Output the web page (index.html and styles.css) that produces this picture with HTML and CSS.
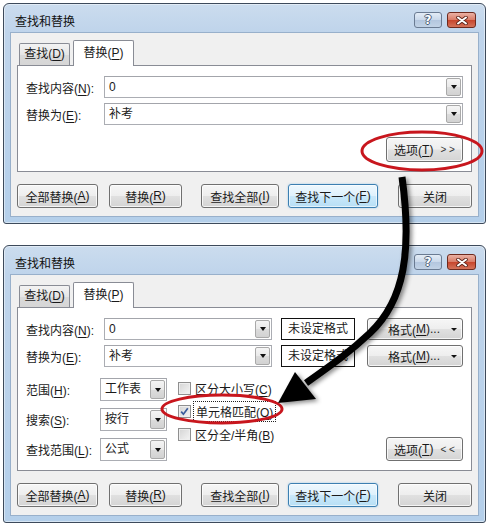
FILE: index.html
```html
<!DOCTYPE html>
<html lang="zh-CN">
<head>
    <meta charset="UTF-8">
    <title>查找和替换</title>
    <link rel="stylesheet" href="styles.css">
</head>
<body>
<div class="page">

    <!-- collapsed dialog -->
    <div class="window">
        <div class="titlebar">
            <span class="title">查找和替换</span>
            <div class="caption-btns">
                <span class="cap-btn cap-help">?</span>
                <span class="cap-btn cap-close">
                    <svg width="12" height="9" viewBox="0 0 12 9"><path d="M2 1.5L10 7.5M10 1.5L2 7.5" stroke="#5a2218" stroke-width="3.6" stroke-linecap="round"/><path d="M2 1.5L10 7.5M10 1.5L2 7.5" stroke="#fff" stroke-width="2" stroke-linecap="round"/></svg>
                </span>
            </div>
        </div>
        <div class="client">
            <div class="tabs">
                <span class="tab">查找(<u>D</u>)</span>
                <span class="tab active">替换(<u>P</u>)</span>
            </div>
            <div class="panel">
                <div class="field-row">
                    <span class="field-label">查找内容(<u>N</u>):</span>
                    <div class="combo"><span class="combo-value">0</span><span class="drop"></span></div>
                </div>
                <div class="field-row">
                    <span class="field-label">替换为(<u>E</u>):</span>
                    <div class="combo"><span class="combo-value">补考</span><span class="drop"></span></div>
                </div>
                <div class="options-row">
                    <span class="btn btn-options">选项(<u>T</u>)<span class="chev">&gt; &gt;</span></span>
                </div>
            </div>
            <div class="button-row">
                <span class="btn btn-replace-all">全部替换(<u>A</u>)</span>
                <span class="btn btn-replace">替换(<u>R</u>)</span>
                <span class="btn btn-find-all">查找全部(<u>I</u>)</span>
                <span class="btn btn-find-next default">查找下一个(<u>F</u>)</span>
                <span class="btn btn-close">关闭</span>
            </div>
        </div>
    </div>

    <!-- expanded dialog -->
    <div class="window">
        <div class="titlebar">
            <span class="title">查找和替换</span>
            <div class="caption-btns">
                <span class="cap-btn cap-help">?</span>
                <span class="cap-btn cap-close">
                    <svg width="12" height="9" viewBox="0 0 12 9"><path d="M2 1.5L10 7.5M10 1.5L2 7.5" stroke="#5a2218" stroke-width="3.6" stroke-linecap="round"/><path d="M2 1.5L10 7.5M10 1.5L2 7.5" stroke="#fff" stroke-width="2" stroke-linecap="round"/></svg>
                </span>
            </div>
        </div>
        <div class="client">
            <div class="tabs">
                <span class="tab">查找(<u>D</u>)</span>
                <span class="tab active">替换(<u>P</u>)</span>
            </div>
            <div class="panel">
                <div class="field-row">
                    <span class="field-label">查找内容(<u>N</u>):</span>
                    <div class="combo combo-short"><span class="combo-value">0</span><span class="drop"></span></div>
                    <span class="format-preview">未设定格式</span>
                    <span class="btn btn-format">格式(<u>M</u>)...<span class="drop-arrow"></span></span>
                </div>
                <div class="field-row">
                    <span class="field-label">替换为(<u>E</u>):</span>
                    <div class="combo combo-short"><span class="combo-value">补考</span><span class="drop"></span></div>
                    <span class="format-preview">未设定格式</span>
                    <span class="btn btn-format">格式(<u>M</u>)...<span class="drop-arrow"></span></span>
                </div>

                <div class="scope">
                    <div class="scope-fields">
                        <span>范围(<u>H</u>):</span>
                        <div class="combo combo-small"><span class="combo-value">工作表</span><span class="drop"></span></div>
                        <span>搜索(<u>S</u>):</span>
                        <div class="combo combo-small"><span class="combo-value">按行</span><span class="drop"></span></div>
                        <span>查找范围(<u>L</u>):</span>
                        <div class="combo combo-small"><span class="combo-value">公式</span><span class="drop"></span></div>
                    </div>
                    <div class="scope-checks">
                        <label class="check"><span class="box"></span><span>区分大小写(<u>C</u>)</span></label>
                        <label class="check"><span class="box"><svg width="9" height="9" viewBox="0 0 9 9"><path d="M1.2 4.6L3.4 7.2L7.8 1.2" fill="none" stroke="#3a5c9c" stroke-width="1.7"/></svg></span><span class="focus">单元格匹配(<u>O</u>)</span></label>
                        <label class="check"><span class="box"></span><span>区分全/半角(<u>B</u>)</span></label>
                    </div>
                    <span class="btn btn-options btn-options-low">选项(<u>T</u>)<span class="chev">&lt; &lt;</span></span>
                </div>
            </div>
            <div class="button-row">
                <span class="btn btn-replace-all">全部替换(<u>A</u>)</span>
                <span class="btn btn-replace">替换(<u>R</u>)</span>
                <span class="btn btn-find-all">查找全部(<u>I</u>)</span>
                <span class="btn btn-find-next default">查找下一个(<u>F</u>)</span>
                <span class="btn btn-close">关闭</span>
            </div>
        </div>
    </div>

    <!-- callout marks drawn over both dialogs -->
    <svg class="marks" width="490" height="527" viewBox="0 0 490 527">
        <defs>
            <filter id="soft-shadow" x="-20%" y="-20%" width="140%" height="140%">
                <feDropShadow dx="2.5" dy="2" stdDeviation="2" flood-color="#000" flood-opacity="0.45"/>
            </filter>
        </defs>
        <ellipse cx="422" cy="151" rx="60" ry="19" fill="none" stroke="#c8161d" stroke-width="3"/>
        <ellipse cx="222" cy="409" rx="60" ry="14" fill="none" stroke="#c8161d" stroke-width="3"/>
        <g filter="url(#soft-shadow)">
            <path d="M402 177C412 250 405 300 370 333C350 352 330 366 306 383" fill="none" stroke="#000" stroke-width="7"/>
            <path d="M278 403L295 372L316 399Z" fill="#000"/>
        </g>
    </svg>
</div>
</body>
</html>
```

FILE: styles.css
```css
* {
    margin: 0;
    padding: 0;
    box-sizing: border-box;
}

body {
    font-family: "Liberation Sans", "Noto Sans CJK SC", sans-serif;
    font-size: 12px;
    color: #1a1a1a;
    background: #fff;
}

u {
    text-decoration-thickness: 1px;
    text-underline-offset: 2px;
}

.page {
    position: relative;
    width: 490px;
    height: 527px;
    padding: 3px 0 0 3px;
    overflow: hidden;
}

/* window frame */
.window {
    width: 483px;
    border: 1px solid #3d4a5b;
    border-radius: 6px 6px 3px 3px;
    background: linear-gradient(#cbdcee 0, #bfd4eb 28px, #b4cfea 100%);
    padding: 0 6px 6px;
    box-shadow: inset 0 0 0 1px rgba(255,255,255,0.45);
}

.window + .window {
    margin-top: 21px;
}

.titlebar {
    height: 28px;
    display: flex;
    justify-content: space-between;
    align-items: flex-start;
    padding: 0 3px 0 5px;
}

.title {
    padding-top: 10px;
    line-height: 16px;
    color: #111;
}

.caption-btns {
    display: flex;
    gap: 5px;
    margin-top: 8px;
}

.cap-btn {
    width: 28px;
    height: 16px;
    border: 1px solid #6a7b92;
    border-radius: 3px;
    display: flex;
    align-items: center;
    justify-content: center;
}

.cap-help {
    background: linear-gradient(#e3ecf6 0%, #c9d8ea 50%, #b3c6de 51%, #c2d3e6 100%);
    color: #fff;
    font-family: "DejaVu Sans", sans-serif;
    font-weight: bold;
    font-size: 12px;
    line-height: 14px;
    text-shadow: 1px 0 #4b5d76, -1px 0 #4b5d76, 0 1px #4b5d76, 0 -1px #4b5d76;
}

.cap-close {
    width: 29px;
    border-color: #6e2a1e;
    background: linear-gradient(#eab1a4 0%, #d97b66 50%, #c7452c 51%, #d4735a 100%);
}

/* client area */
.client {
    background: #f0f0f0;
    border: 1px solid #98b0cb;
    padding: 7px 6px 8px;
}

.tabs {
    display: flex;
    align-items: flex-end;
    height: 25px;
    padding-left: 2px;
}

.tab {
    width: 51px;
    height: 22px;
    border: 1px solid #898c95;
    border-bottom: none;
    border-radius: 2px 2px 0 0;
    background: linear-gradient(#f3f3f3, #e6e6e6 50%, #dadada 51%, #d6d6d6);
    text-align: center;
    line-height: 21px;
}

.tab.active {
    width: 61px;
    height: 26px;
    margin-left: 3px;
    margin-bottom: -1px;
    background: #fff;
    line-height: 24px;
    position: relative;
    z-index: 1;
}

.panel {
    border: 1px solid #898c95;
    background: #fff;
    padding: 10px 8px 9px;
}

.field-row {
    display: flex;
    align-items: center;
    height: 22px;
}

.field-row + .field-row {
    margin-top: 5px;
}

.field-label {
    width: 78px;
    flex-shrink: 0;
}

/* combo boxes */
.combo {
    flex: 1;
    height: 22px;
    display: flex;
    border: 1px solid #abadb3;
    border-top-color: #a3a5ab;
    background: #fff;
    padding: 1px;
}

.combo-short {
    flex: none;
    width: 168px;
}

.combo-small {
    flex: none;
    width: 67px;
    height: 23px;
}

.combo-value {
    flex: 1;
    padding-left: 3px;
    line-height: 18px;
    white-space: nowrap;
}

.combo-small .combo-value {
    line-height: 19px;
}

.drop {
    width: 15px;
    border: 1px solid #a9a9a9;
    border-radius: 2px;
    background: linear-gradient(#f5f5f5, #e9e9e9 50%, #dcdcdc 51%, #d2d2d2);
    display: flex;
    align-items: center;
    justify-content: center;
}

.drop::after,
.drop-arrow {
    content: "";
    border-left: 3.5px solid transparent;
    border-right: 3.5px solid transparent;
    border-top: 4px solid #111;
}

.format-preview {
    width: 74px;
    height: 22px;
    margin-left: 9px;
    border: 1px solid #111;
    background: #fff;
    text-align: center;
    line-height: 20px;
}

/* push buttons */
.btn {
    height: 24px;
    border: 1px solid #707070;
    border-radius: 3px;
    background: linear-gradient(#f6f6f6 0%, #eeeeee 48%, #e0e0e0 52%, #d4d4d4 100%);
    box-shadow: inset 0 0 0 1px rgba(255,255,255,0.75);
    display: flex;
    align-items: center;
    justify-content: center;
    white-space: nowrap;
}

.btn.default {
    border-color: #3c7fb1;
    background: linear-gradient(#eef8fe 0%, #dff1fc 48%, #c9e8fa 52%, #b7dff5 100%);
    box-shadow: inset 0 0 0 1px rgba(255,255,255,0.6), 0 0 2px rgba(60,160,230,0.5);
}

.btn-format {
    width: 96px;
    height: 22px;
    margin-left: 12px;
    justify-content: flex-start;
    padding: 0 5px 0 20px;
}

.btn-format .drop-arrow {
    margin-left: auto;
    border-top-width: 3px;
    border-left-width: 3px;
    border-right-width: 3px;
}

.options-row {
    display: flex;
    justify-content: flex-end;
    margin-top: 12px;
}

.btn-options {
    width: 77px;
    height: 25px;
}

.btn-options-low {
    height: 24px;
    margin-left: auto;
    align-self: flex-end;
}

.chev {
    margin-left: 7px;
    font-size: 10px;
    letter-spacing: 0;
    color: #333;
}

.button-row {
    display: flex;
    margin-top: 12px;
}

.btn-replace-all { width: 81px; }
.btn-replace { width: 73px; margin-left: 11px; }
.btn-find-all { width: 78px; margin-left: 19px; }
.btn-find-next { width: 90px; margin-left: 9px; }
.btn-close { width: 74px; margin-left: 20px; }

/* search scope + options */
.scope {
    display: flex;
    margin-top: 11px;
}

.scope-fields {
    display: grid;
    grid-template-columns: 74px 67px;
    grid-auto-rows: 23px;
    row-gap: 7px;
    align-items: center;
}

.scope-checks {
    display: flex;
    flex-direction: column;
    margin-left: 11px;
    margin-top: -1px;
}

.check {
    height: 23px;
    display: flex;
    align-items: center;
    gap: 4px;
}

.box {
    width: 13px;
    height: 13px;
    border: 1px solid #8f8f8f;
    background: linear-gradient(135deg, #d4d4d4, #f4f4f4);
    box-shadow: inset 0 0 0 1px #eeeeee;
    display: flex;
    align-items: center;
    justify-content: center;
}

.focus {
    outline: 1px dotted #222;
    outline-offset: 1px;
    padding: 0 1px;
}

.marks {
    position: absolute;
    top: 0;
    left: 0;
    pointer-events: none;
}
```
